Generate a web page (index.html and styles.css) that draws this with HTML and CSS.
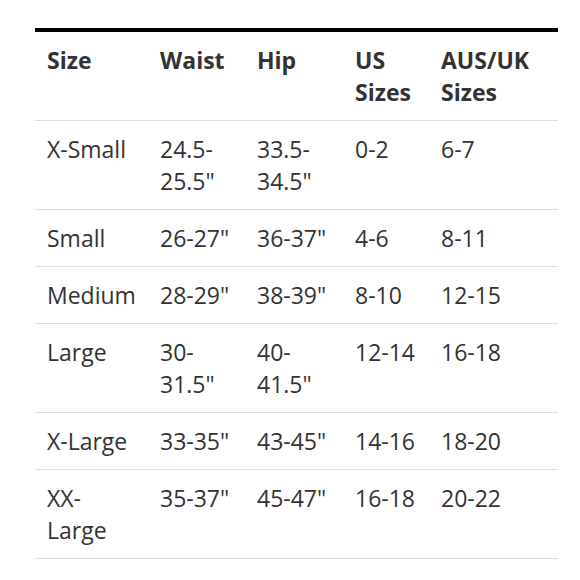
FILE: index.html
```html
<!DOCTYPE html>
<html>
<head>
<meta charset="utf-8">
<link rel="stylesheet" href="styles.css">
</head>
<body>
<div class="wrap">
<table class="sizes">
  <thead>
    <tr><th class="c1">Size</th><th class="c2">Waist</th><th class="c3">Hip</th><th class="c4">US Sizes</th><th class="c5">AUS/UK Sizes</th></tr>
  </thead>
  <tbody>
    <tr><td>X-Small</td><td>24.5-<br>25.5"</td><td>33.5-<br>34.5"</td><td>0-2</td><td>6-7</td></tr>
    <tr><td>Small</td><td>26-27"</td><td>36-37"</td><td>4-6</td><td>8-11</td></tr>
    <tr><td>Medium</td><td>28-29"</td><td>38-39"</td><td>8-10</td><td>12-15</td></tr>
    <tr><td>Large</td><td>30-<br>31.5"</td><td>40-<br>41.5"</td><td>12-14</td><td>16-18</td></tr>
    <tr><td>X-Large</td><td>33-35"</td><td>43-45"</td><td>14-16</td><td>18-20</td></tr>
    <tr><td>XX-<br>Large</td><td>35-37"</td><td>45-47"</td><td>16-18</td><td>20-22</td></tr>
  </tbody>
</table>
</div>
</body>
</html>
```
FILE: styles.css
```css
html, body {
  margin: 0;
  padding: 0;
  background: #fff;
}
.wrap {
  padding: 28px 0 0 35px;
}
.sizes {
  width: 523px;
  border-collapse: collapse;
  border-top: 4px solid #000;
  font-family: "Open Sans", "Noto Sans", sans-serif;
  font-size: 23px;
  line-height: 32px;
  color: #333;
  table-layout: fixed;
}
.sizes th, .sizes td {
  text-align: left;
  vertical-align: top;
  padding: 12px 12px;
  border-bottom: 1px solid #dedede;
}
.sizes th {
  font-weight: 700;
}
.sizes td {
  font-weight: 400;
}
.c1 { width: 89px; }
.c2 { width: 73px; }
.c3 { width: 74px; }
.c4 { width: 62px; }
.c5 { width: auto; }
```
